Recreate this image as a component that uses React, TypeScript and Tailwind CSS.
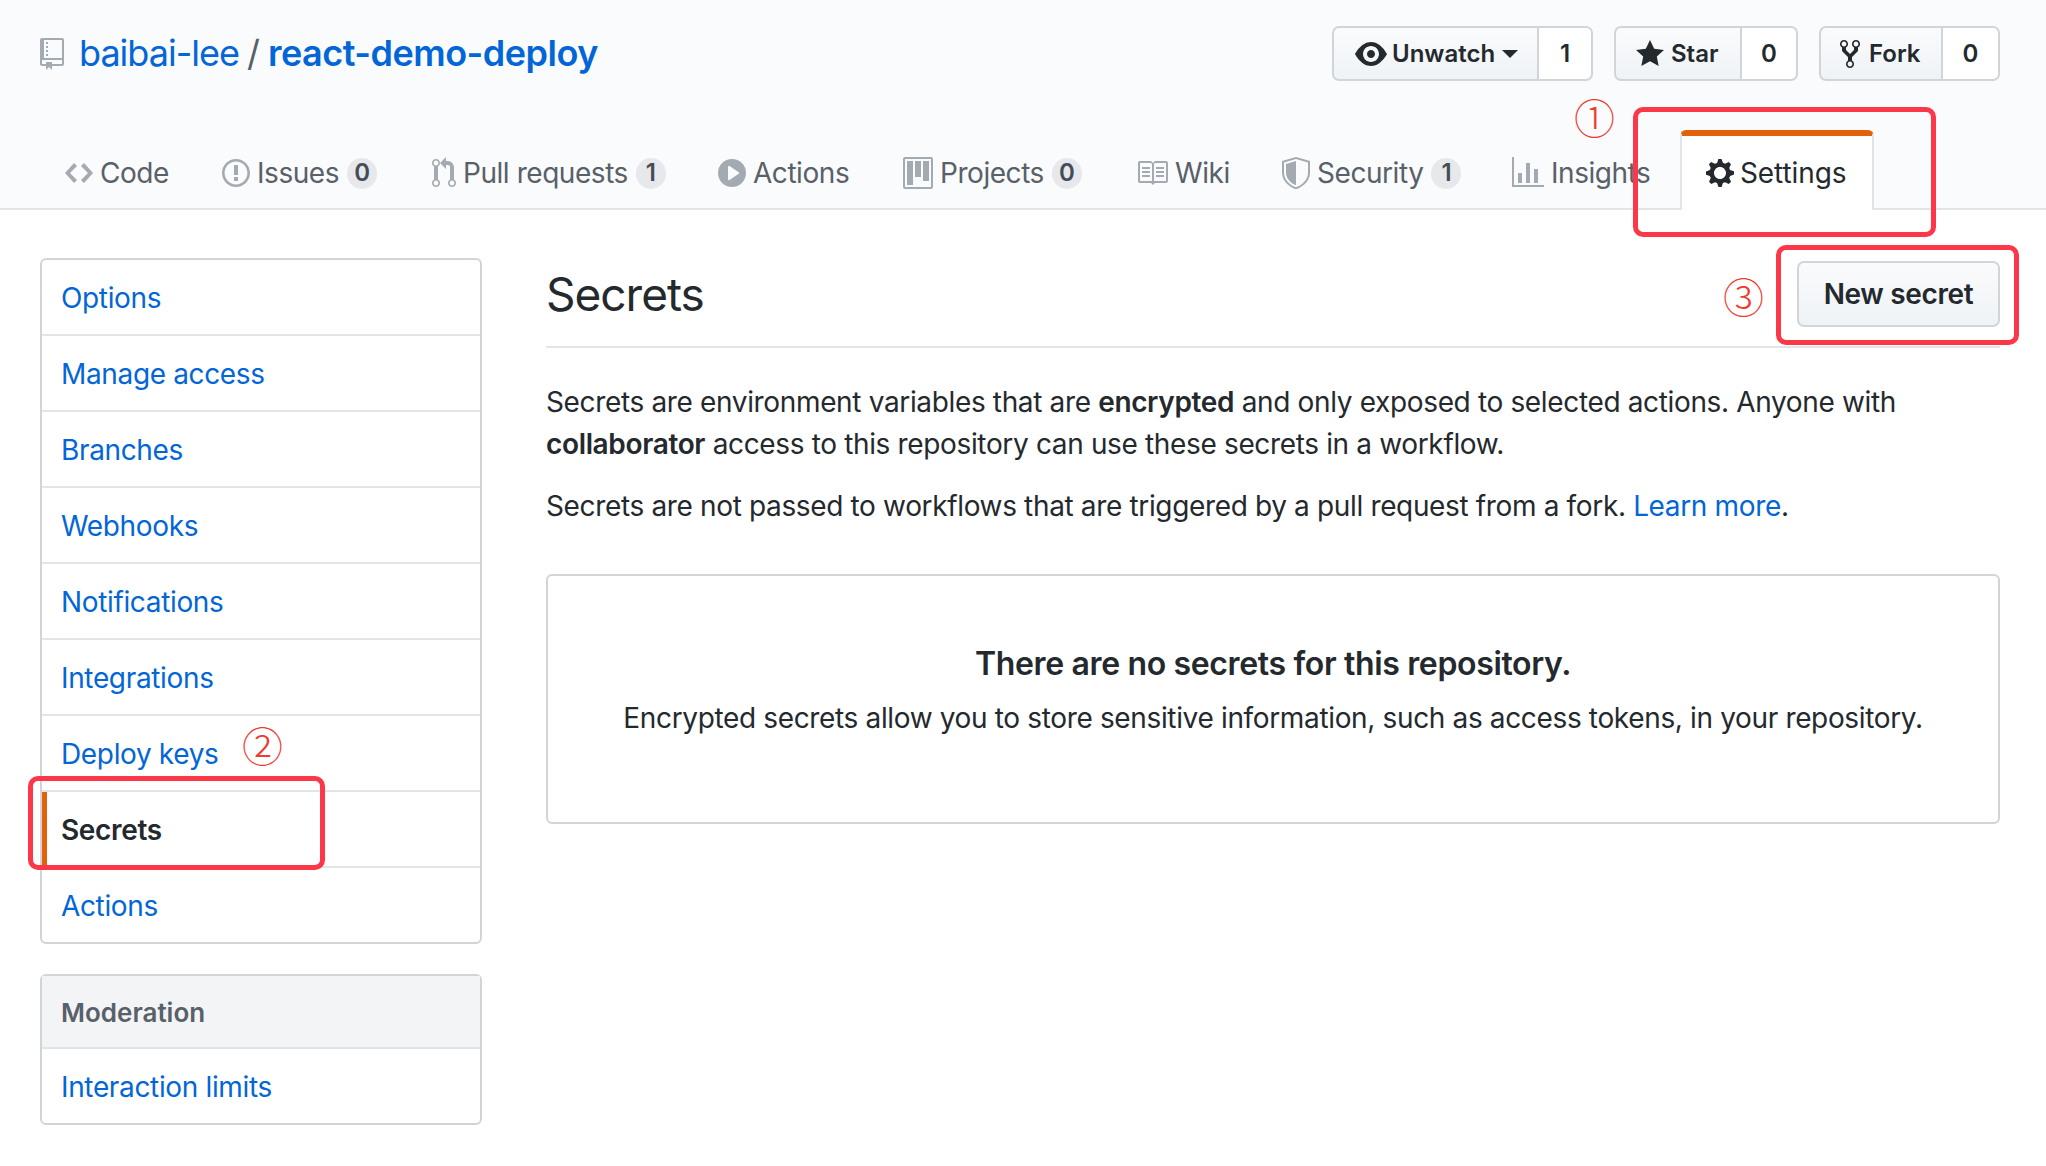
import React from "react";

const P: Record<string, [number, string]> = {
  repo: [12, "M4 9H3V8h1v1zm0-3H3v1h1V6zm0-2H3v1h1V4zm0-2H3v1h1V2zm8-1v12c0 .55-.45 1-1 1H6v2l-1.5-1.5L3 16v-2H1c-.55 0-1-.45-1-1V1c0-.55.45-1 1-1h10c.55 0 1 .45 1 1zm-1 10H1v2h2v-1h3v1h5v-2zm0-10H2v9h9V1z"],
  code: [14, "M9.5 3L8 4.5 11.5 8 8 11.5 9.5 13 14 8 9.5 3zm-5 0L0 8l4.5 5L6 11.5 2.5 8 6 4.5 4.5 3z"],
  issue: [14, "M7 2.3c3.14 0 5.7 2.56 5.7 5.7s-2.56 5.7-5.7 5.7A5.71 5.71 0 011.3 8c0-3.14 2.56-5.7 5.7-5.7zM7 1C3.14 1 0 4.14 0 8s3.14 7 7 7 7-3.14 7-7-3.14-7-7-7zm1 3H6v5h2V4zm0 6H6v2h2v-2z"],
  pr: [12, "M11 11.28V5c-.03-.78-.34-1.47-.94-2.06C9.46 2.35 8.78 2.03 8 2H7V0L4 3l3 3V4h1c.27.02.48.11.69.31.21.2.3.42.31.69v6.28A1.993 1.993 0 0010 15a1.993 1.993 0 001-3.72zm-1 2.92c-.66 0-1.2-.55-1.2-1.2 0-.65.55-1.2 1.2-1.2.65 0 1.2.55 1.2 1.2 0 .65-.55 1.2-1.2 1.2zM4 3c0-1.11-.89-2-2-2a1.993 1.993 0 00-1 3.72v6.56A1.993 1.993 0 002 15a1.993 1.993 0 001-3.72V4.72c.59-.34 1-.98 1-1.72zm-.8 10c0 .66-.55 1.2-1.2 1.2-.65 0-1.2-.55-1.2-1.2 0-.65.55-1.2 1.2-1.2.65 0 1.2.55 1.2 1.2zM2 4.2C1.34 4.2.8 3.65.8 3c0-.65.55-1.2 1.2-1.2.65 0 1.2.55 1.2 1.2 0 .65-.55 1.2-1.2 1.2z"],
  play: [14, "M14 8A7 7 0 110 8a7 7 0 0114 0zm-8.223 3.482l4.599-3.066a.5.5 0 000-.832L5.777 4.518A.5.5 0 005 4.934v6.132a.5.5 0 00.777.416z"],
  project: [15, "M10 12h3V2h-3v10zm-4-2h3V2H6v8zm-4 4h3V2H2v12zm-1 1h13V1H1v14zM14 0H1a1 1 0 00-1 1v14a1 1 0 001 1h13a1 1 0 001-1V1a1 1 0 00-1-1z"],
  book: [16, "M3 5h4v1H3V5zm0 3h4V7H3v1zm0 2h4V9H3v1zm11-5h-4v1h4V5zm0 2h-4v1h4V7zm0 2h-4v1h4V9zm2-6v9c0 .55-.45 1-1 1H9.5l-1 1-1-1H2c-.55 0-1-.45-1-1V3c0-.55.45-1 1-1h5.5l1 1 1-1H15c.55 0 1 .45 1 1zm-8 .5L7.5 3H2v9h6V3.5zm7-.5H9.5l-.5.5V12h6V3z"],
  shield: [14, "M0 2l7-2 7 2v6.02C14 12.69 8.69 16 7 16c-1.69 0-7-3.31-7-7.98V2zm1 .75L7 1l6 1.75v5.268C13 12.104 8.449 15 7 15c-1.449 0-6-2.896-6-6.982V2.75zm1 .75L7 2v12c-1.207 0-5-2.482-5-5.985V3.5z"],
  graph: [16, "M16 14v1H0V0h1v14h15zM5 13H3V8h2v5zm4 0H7V3h2v10zm4 0h-2V6h2v7z"],
  gear: [14, "M14 8.77v-1.6l-1.94-.64-.45-1.09.88-1.84-1.13-1.13-1.81.91-1.09-.45-.69-1.92h-1.6l-.63 1.94-1.11.45-1.84-.88-1.13 1.13.91 1.81-.45 1.09L0 7.23v1.59l1.94.64.45 1.09-.88 1.84 1.13 1.13 1.81-.91 1.09.45.69 1.92h1.59l.63-1.94 1.11-.45 1.84.88 1.13-1.13-.92-1.81.47-1.09L14 8.75v.02zM7 11c-1.66 0-3-1.34-3-3s1.34-3 3-3 3 1.34 3 3-1.34 3-3 3z"],
  eye: [16, "M8.06 2C3 2 0 8 0 8s3 6 8.06 6C13 14 16 8 16 8s-3-6-7.94-6zM8 12c-2.2 0-4-1.78-4-4 0-2.2 1.8-4 4-4 2.22 0 4 1.8 4 4 0 2.22-1.78 4-4 4zm2-4c0 1.11-.89 2-2 2-1.11 0-2-.89-2-2 0-1.11.89-2 2-2 1.11 0 2 .89 2 2z"],
  star: [14, "M14 6l-4.9-.64L7 1 4.9 5.36 0 6l3.6 3.26L2.67 14 7 11.67 11.33 14l-.93-4.74L14 6z"],
  fork: [10, "M8 1a1.993 1.993 0 00-1 3.72V6L5 8 3 6V4.72A1.993 1.993 0 002 1a1.993 1.993 0 00-1 3.72V6.5l3 3v1.78A1.993 1.993 0 005 15a1.993 1.993 0 001-3.72V9.5l3-3V4.72A1.993 1.993 0 008 1zM2 4.2C1.34 4.2.8 3.65.8 3c0-.65.55-1.2 1.2-1.2.65 0 1.2.55 1.2 1.2 0 .65-.55 1.2-1.2 1.2zm3 10c-.66 0-1.2-.55-1.2-1.2 0-.65.55-1.2 1.2-1.2.65 0 1.2.55 1.2 1.2 0 .65-.55 1.2-1.2 1.2zm3-10c-.66 0-1.2-.55-1.2-1.2 0-.65.55-1.2 1.2-1.2.65 0 1.2.55 1.2 1.2 0 .65-.55 1.2-1.2 1.2z"],
};

function Icon({ name, className }: { name: string; className?: string }) {
  const [w, d] = P[name];
  return (
    <svg viewBox={`0 0 ${w} 16`} width={w * 2} height={32} className={`shrink-0 ${className ?? ""}`} fill="currentColor" fillRule="evenodd">
      <path d={d} />
    </svg>
  );
}

function Counter({ n }: { n: number }) {
  return (
    <span className="ml-[8px] flex h-[31px] w-[30px] items-center justify-center rounded-full bg-[#e6e8eb] text-[24px] font-semibold tracking-normal text-[#444d56]">
      {n}
    </span>
  );
}

function Tab({ icon, label, count, width }: { icon: string; label: string; count?: number; width: string }) {
  return (
    <div className={`flex h-full shrink-0 items-center pt-[8px] text-[28px] tracking-[-0.45px] text-[#586069] ${width}`}>
      <Icon name={icon} className="mr-[7px] text-[#a3aab1]" />
      <span>{label}</span>
      {count !== undefined && <Counter n={count} />}
    </div>
  );
}

function Social({ icon, label, caret, count, labelW, countW, gap }: { icon: string; label: string; caret?: boolean; count: number; labelW: string; countW: string; gap: string }) {
  return (
    <div className="flex h-[55px] text-[24px] font-semibold tracking-normal text-[#24292e]">
      <div className={`flex items-center rounded-l-[7px] border-2 border-[#d1d5da] bg-linear-to-b from-[#fafbfc] to-[#eff3f6] ${gap} ${labelW}`}>
        <Icon name={icon} />
        <span>{label}</span>
        {caret && <span className="ml-[2px] h-0 w-0 border-x-[8px] border-t-[8px] border-x-transparent border-t-[#24292e]" />}
      </div>
      <div className={`flex items-center justify-center rounded-r-[7px] border-y-2 border-r-2 border-[#d1d5da] bg-white ${countW}`}>{count}</div>
    </div>
  );
}

function Row({ label, active, last }: { label: string; active?: boolean; last?: boolean }) {
  return (
    <div
      className={`flex items-center pl-[19px] pt-[2px] text-[28px] ${last ? "h-[74px]" : "h-[76px] border-b-2 border-[#e1e4e8]"} ${
        active ? "border-l-[5px] !pl-[14px] border-l-[#e36209] font-semibold text-[#24292e]" : "text-[#0366d6]"
      }`}
    >
      {label}
    </div>
  );
}

function RedBox({ className }: { className: string }) {
  return <div className={`pointer-events-none absolute rounded-[10px] border-[5px] border-[#fb3748] ${className}`} />;
}

function Mark({ glyph, className }: { glyph: string; className: string }) {
  return <span className={`pointer-events-none absolute text-[41px] font-light leading-none tracking-normal text-[#f03a2e] [font-family:'Noto_Sans_CJK_SC',sans-serif] ${className}`}>{glyph}</span>;
}

export default function App() {
  const items = ["Options", "Manage access", "Branches", "Webhooks", "Notifications", "Integrations", "Deploy keys"];
  return (
    <div className="relative h-[1166px] w-[2046px] overflow-hidden bg-white tracking-[-0.35px] text-[#24292e] [font-family:Inter,'Liberation_Sans',sans-serif]">
      <header className="h-[210px] border-b-2 border-[#e1e4e8] bg-[#fafbfc]">
        <div className="flex h-[130px] pl-[40px] pr-[46px] pt-[26px]">
          <div className="flex h-[55px] items-center">
            <Icon name="repo" className="mr-[15px] text-[#a3aab1]" />
            <div className="flex items-center pb-[2px] text-[36px]">
              <span className="tracking-[-1px] text-[#0366d6]">baibai-lee</span>
              <span className="mx-[8px] tracking-normal text-[#586069]">/</span>
              <span className="font-semibold tracking-[-0.5px] text-[#0366d6]">react-demo-deploy</span>
            </div>
          </div>
          <div className="ml-auto flex gap-[21px]">
            <Social icon="eye" label="Unwatch" caret count={1} gap="gap-[5px]" labelW="w-[207px] pl-[21px]" countW="w-[54px]" />
            <Social icon="star" label="Star" count={0} gap="gap-[7px]" labelW="w-[128px] pl-[20px]" countW="w-[56px]" />
            <Social icon="fork" label="Fork" count={0} gap="gap-[9px]" labelW="w-[124px] pl-[19px]" countW="w-[57px]" />
          </div>
        </div>
        <nav className="flex h-[78px] pl-[65px]">
          <Tab icon="code" label="Code" width="w-[157px]" />
          <Tab icon="issue" label="Issues" count={0} width="w-[210px]" />
          <Tab icon="pr" label="Pull requests" count={1} width="w-[286px]" />
          <Tab icon="play" label="Actions" width="w-[185px]" />
          <Tab icon="project" label="Projects" count={0} width="w-[233px]" />
          <Tab icon="book" label="Wiki" width="w-[146px]" />
          <Tab icon="shield" label="Security" count={1} width="w-[230px]" />
          <Tab icon="graph" label="Insights" width="w-[168px]" />
          <div className="flex h-[80px] w-[194px] shrink-0 items-center rounded-t-[6px] border-x-2 border-t-[6px] border-x-[#e1e4e8] border-t-[#e36209] bg-white pl-[24px] text-[28px] tracking-[-0.1px]">
            <Icon name="gear" className="mr-[6px] text-[#24292e]" />
            <span>Settings</span>
          </div>
        </nav>
      </header>

      <main className="flex gap-[64px] pl-[40px] pr-[46px] pt-[48px]">
        <aside className="w-[442px] shrink-0">
          <div className="rounded-[6px] border-2 border-[#d1d5da]">
            {items.map((i) => (
              <Row key={i} label={i} />
            ))}
            <Row label="Secrets" active />
            <Row label="Actions" last />
          </div>
          <div className="mt-[30px] rounded-[6px] border-2 border-[#d1d5da]">
            <div className="flex h-[73px] items-center border-b-2 border-[#e1e4e8] bg-[#f3f4f6] pl-[19px] pt-[1px] text-[26px] font-semibold tracking-normal text-[#586069]">Moderation</div>
            <div className="flex h-[74px] items-center pl-[19px] pt-[2px] text-[28px] text-[#0366d6]">Interaction limits</div>
          </div>
        </aside>

        <section className="min-w-0 flex-1">
          <div className="flex h-[90px] items-start justify-between border-b-2 border-[#e1e4e8]">
            <h1 className="text-[46px] leading-[72px] tracking-[-1px]">Secrets</h1>
            <button className="mt-[3px] h-[66px] w-[203px] rounded-[7px] border-2 border-[#d1d5da] bg-linear-to-b from-[#fafbfc] to-[#eff3f6] text-[28px] font-semibold text-[#24292e]">New secret</button>
          </div>
          <div className="mt-[33px] text-[28px] leading-[42px]">
            <p>
              Secrets are environment variables that are <b className="font-semibold">encrypted</b> and only exposed to selected actions. Anyone with <b className="font-semibold">collaborator</b> access to this repository can use these secrets in a workflow.
            </p>
            <p className="mt-[20px]">
              Secrets are not passed to workflows that are triggered by a pull request from a fork. <span className="text-[#0366d6]">Learn more</span>.
            </p>
          </div>
          <div className="mt-[47px] flex h-[250px] flex-col items-center justify-center rounded-[6px] border-2 border-[#d1d5da] pb-[21px]">
            <h3 className="text-[32px] font-semibold leading-[50px]">There are no secrets for this repository.</h3>
            <p className="mt-[8px] text-[28px] leading-[42px]">Encrypted secrets allow you to store sensitive information, such as access tokens, in your repository.</p>
          </div>
        </section>
      </main>

      <RedBox className="left-[1633px] top-[107px] h-[130px] w-[303px]" />
      <RedBox className="left-[1776px] top-[245px] h-[100px] w-[243px]" />
      <RedBox className="left-[28px] top-[776px] h-[94px] w-[297px]" />
      <Mark glyph="①" className="left-[1574px] top-[96px]" />
      <Mark glyph="②" className="left-[242px] top-[724px]" />
      <Mark glyph="③" className="left-[1723px] top-[275px]" />
    </div>
  );
}
